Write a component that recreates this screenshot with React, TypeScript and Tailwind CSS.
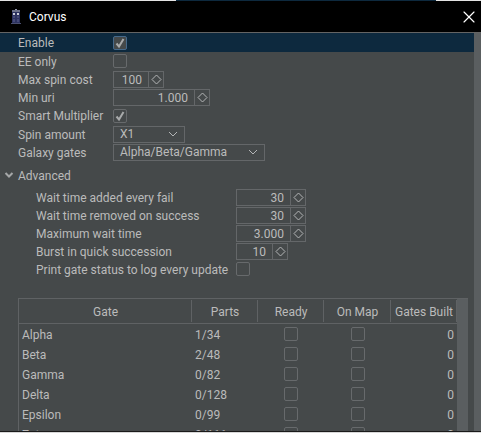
import React from "react";
import { X } from "lucide-react";

const gates = [
  { name: "Alpha", parts: "1/34" },
  { name: "Beta", parts: "2/48" },
  { name: "Gamma", parts: "0/82" },
  { name: "Delta", parts: "0/128" },
  { name: "Epsilon", parts: "0/99" },
  { name: "Zeta", parts: "0/111" },
];

function Tardis() {
  return (
    <svg width="10" height="15" viewBox="0 0 10 15" className="shrink-0">
      <rect x="4" y="0" width="2" height="1" fill="#8f93a8" />
      <rect x="1" y="1" width="8" height="2" fill="#6b7088" />
      <rect x="1" y="3" width="8" height="11" fill="#2c3260" />
      <rect x="0" y="14" width="10" height="1" fill="#4a4f70" />
      <rect x="2" y="4" width="2" height="2" fill="#c9ccd8" />
      <rect x="6" y="4" width="2" height="2" fill="#c9ccd8" />
      <rect x="2" y="7" width="2" height="2" fill="#454a78" />
      <rect x="6" y="7" width="2" height="2" fill="#454a78" />
      <rect x="2" y="10" width="2" height="3" fill="#454a78" />
      <rect x="6" y="10" width="2" height="3" fill="#454a78" />
    </svg>
  );
}

function Checkbox({ checked = false, focused = false }: { checked?: boolean; focused?: boolean }) {
  return (
    <div
      className={`flex h-[14px] w-[14px] items-center justify-center rounded-[2px] border ${
        focused ? "border-[#46698a] bg-[#45494a]" : "border-[#676a6c]"
      }`}
    >
      {checked && (
        <svg width="12" height="12" viewBox="0 0 12 12" fill="none">
          <path d="M2.5 6.5 L5 9.5 L9.5 2" stroke="#a8aaab" strokeWidth="2" />
        </svg>
      )}
    </div>
  );
}

function Spinner({ value, width }: { value: string; width: string }) {
  return (
    <div className={`flex h-[17px] border border-[#646769] ${width}`}>
      <div className="flex-1 pr-[6px] pt-px text-right leading-[15px]">{value}</div>
      <div className="flex w-[15px] items-center justify-center border-l border-[#646769]">
        <svg width="11" height="11" viewBox="0 0 11 11" fill="none">
          <path d="M5.5 1 L10 5.5 L5.5 10 L1 5.5 Z" stroke="#b4b6b7" />
        </svg>
      </div>
    </div>
  );
}

function Combo({ value, width }: { value: string; width: string }) {
  return (
    <div className={`flex h-[17px] items-center justify-between border border-[#646769] pl-[6px] pr-[3px] ${width}`}>
      <span className="pt-px leading-[15px]">{value}</span>
      <svg width="12" height="12" viewBox="0 0 12 12" fill="none" className="mr-[2px]">
        <path d="M2 4 L6 8 L10 4" stroke="#b4b6b7" />
      </svg>
    </div>
  );
}

function Row({ label, children, indent = false, tall = false }: { label: string; children: React.ReactNode; indent?: boolean; tall?: boolean }) {
  return (
    <div className={`flex items-center ${tall ? "h-[19px]" : "h-[18px]"} ${indent ? "pl-[36px]" : "pl-[18px]"}`}>
      <div className={`shrink-0 whitespace-nowrap pt-px ${indent ? "w-[200px]" : "w-[95px]"}`}>{label}</div>
      {children}
    </div>
  );
}

function HeaderCell({ width, label }: { width: string; label: string }) {
  return (
    <div className={`relative flex items-center justify-center whitespace-nowrap pt-px ${width}`}>
      {label}
      <div className="absolute bottom-[1px] right-0 top-[1px] w-px bg-[#5f6264]" />
    </div>
  );
}

export default function App() {
  return (
    <div className="flex h-[433px] w-[481px] flex-col overflow-hidden bg-[#45494a] font-['Roboto',sans-serif] text-[12px] text-[#bbbbbb]">
      {/* bit of the window behind */}
      <div className="flex h-px shrink-0">
        <div className="w-[176px] bg-[#e4e4e4]" />
        <div className="flex-1 bg-[#0d293e]" />
        <div className="w-[45px] bg-[#e4e4e4]" />
      </div>

      {/* title bar */}
      <div className="flex h-[31px] shrink-0 items-center justify-between bg-black pl-[11px] pr-[2px]">
        <div className="flex items-center gap-[8px] text-white">
          <Tardis />
          <span>Corvus</span>
        </div>
        <X size={20} strokeWidth={1.4} className="text-white" />
      </div>
      <div className="h-px shrink-0 bg-[#646464]" />

      <div className="flex min-h-0 flex-1">
        <div className="min-w-0 flex-1">
          <div className="flex h-[19px] items-center bg-[#0d293e] pl-[18px]">
            <div className="w-[95px]">Enable</div>
            <Checkbox checked focused />
          </div>
          <Row label="EE only"><Checkbox /></Row>
          <Row label="Max spin cost"><Spinner value="100" width="w-[51px]" /></Row>
          <Row label="Min uri"><Spinner value="1.000" width="w-[97px]" /></Row>
          <Row tall label="Smart Multiplier"><Checkbox checked /></Row>
          <Row label="Spin amount"><Combo value="X1" width="w-[72px]" /></Row>
          <Row label="Galaxy gates"><Combo value="Alpha/Beta/Gamma" width="w-[152px]" /></Row>

          <div className="mt-[5px] flex h-[18px] items-center pl-[3px]">
            <svg width="12" height="12" viewBox="0 0 12 12" fill="none" className="mr-[3px]">
              <path d="M2.5 4 L6 7.5 L9.5 4" stroke="#a5a7a8" strokeWidth="2" />
            </svg>
            <span className="pt-px">Advanced</span>
          </div>

          <div className="mt-[4px]">
            <Row indent label="Wait time added every fail"><Spinner value="30" width="w-[70px]" /></Row>
            <Row indent label="Wait time removed on success"><Spinner value="30" width="w-[70px]" /></Row>
            <Row indent label="Maximum wait time"><Spinner value="3.000" width="w-[70px]" /></Row>
            <Row indent label="Burst in quick succession"><Spinner value="10" width="w-[52px]" /></Row>
            <Row indent label="Print gate status to log every update"><Checkbox /></Row>
          </div>

          {/* gate table */}
          <div className="ml-[18px] mr-[6px] mt-[20px] flex border-l border-t border-[#5f6264]">
            <div className="min-w-0 flex-1">
              <div className="flex h-[25px] border-b border-[#5f6264]">
                <HeaderCell width="w-[173px]" label="Gate" />
                <HeaderCell width="w-[66px]" label="Parts" />
                <HeaderCell width="w-[66px]" label="Ready" />
                <HeaderCell width="w-[67px]" label="On Map" />
                <HeaderCell width="w-[66px]" label="Gates Built" />
              </div>
              {gates.map((g) => (
                <div key={g.name} className="flex h-[20px] items-center">
                  <div className="w-[173px] pl-[3px] pt-[2px]">{g.name}</div>
                  <div className="w-[66px] pl-[3px] pt-[2px]">{g.parts}</div>
                  <div className="flex w-[66px] justify-center"><Checkbox /></div>
                  <div className="flex w-[67px] justify-center"><Checkbox /></div>
                  <div className="w-[66px] pr-[3px] pt-[2px] text-right">0</div>
                </div>
              ))}
            </div>
            <div className="w-[11px] shrink-0 bg-[#5a5e60]" />
          </div>
        </div>
        <div className="w-[7px] shrink-0 bg-[#5a5e60]" />
      </div>
      <div className="h-px shrink-0 bg-[#1a1a1a]" />
      <div className="h-px shrink-0 bg-[#d8d8d8]" />
    </div>
  );
}
